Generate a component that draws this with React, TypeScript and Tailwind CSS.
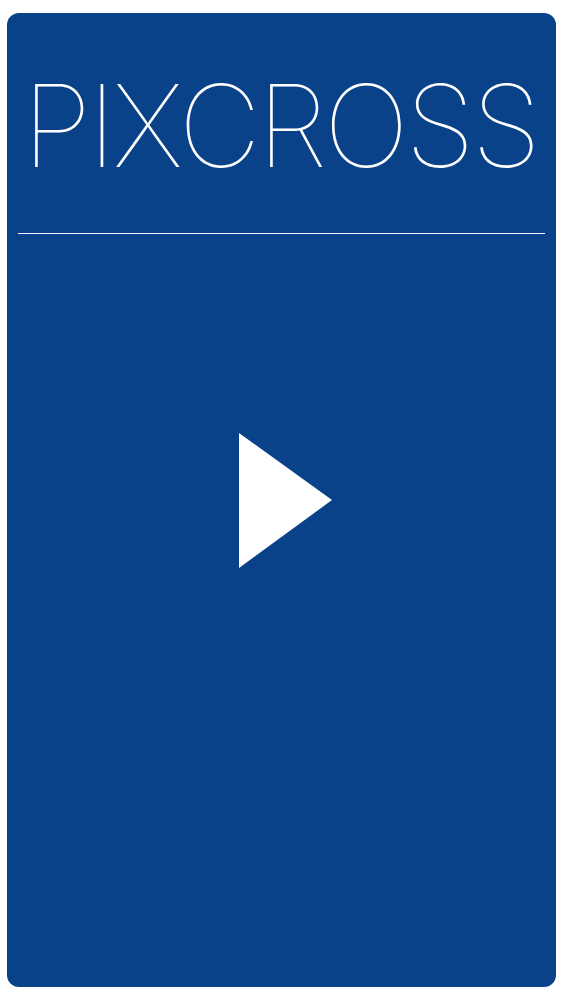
export default function App() {
  return (
    <div className="w-[563px] h-[1000px] bg-white pt-[13px] px-[7px] pb-[13px]">
      <div className="h-[974px] w-[549px] bg-[#0a428a] rounded-[12px] flex flex-col">
        <div className="h-[220px] flex items-start justify-center pt-[56px]">
          <span
            className="text-white font-thin text-[114px] leading-none tracking-[-3.6px] ml-[-3px]"
            style={{ fontFamily: "Inter, 'Noto Sans', sans-serif" }}
          >
            PIXCROSS
          </span>
        </div>
        <div className="mx-[11px] h-px bg-white" />
        <div className="flex-1 flex items-start justify-center pt-[199px]">
          <svg width="93" height="135" viewBox="0 0 93 135" className="ml-[8px]">
            <polygon points="0,0 93,67 0,135" fill="white" />
          </svg>
        </div>
      </div>
    </div>
  );
}
